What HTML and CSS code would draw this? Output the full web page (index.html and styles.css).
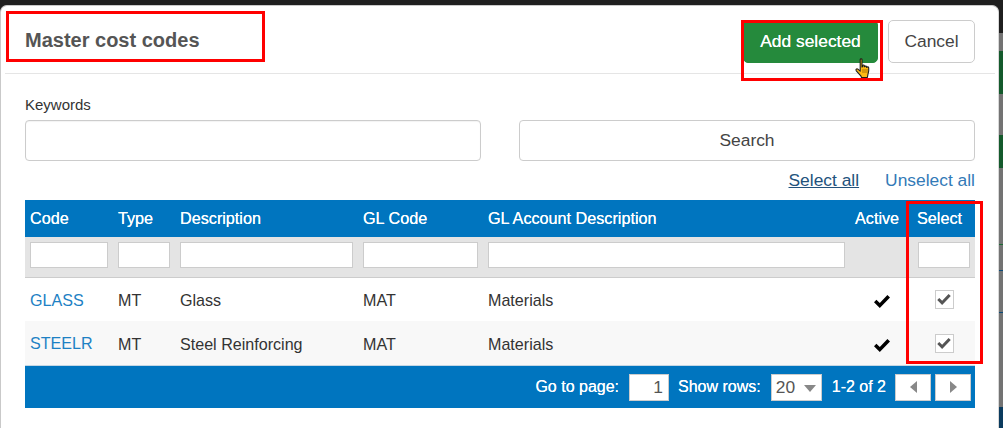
FILE: index.html
```html
<!DOCTYPE html>
<html lang="en">
<head>
<meta charset="utf-8">
<title>Master cost codes</title>
<link rel="stylesheet" href="styles.css">
</head>
<body>
<div class="side-strip">
  <i class="s-18"></i><i class="s-green s-43"></i><i class="s-41"></i><i class="s-green s-33"></i><i class="s-76"></i><i class="s-line-g"></i><i class="s-25"></i><i class="s-line-n"></i><i class="s-41"></i><i class="s-line-n"></i><i class="s-94"></i><i class="s-navy"></i>
</div>
<div class="modal">
  <header class="modal-header">
    <h2 class="modal-title">Master cost codes</h2>
    <div class="actions">
      <button class="btn btn-add" type="button">Add selected</button>
      <button class="btn btn-cancel" type="button">Cancel</button>
    </div>
  </header>
  <div class="modal-body">
    <label class="kw-label" for="kw">Keywords</label>
    <div class="search-row">
      <input id="kw" class="field" type="text">
      <button class="field search-btn" type="button">Search</button>
    </div>
    <div class="select-links">
      <a class="link-dark" href="#">Select all</a>
      <a class="link-light" href="#">Unselect all</a>
    </div>
    <table class="grid">
      <colgroup>
        <col class="c-code"><col class="c-type"><col class="c-desc"><col class="c-gl"><col class="c-acc"><col class="c-active"><col class="c-select">
      </colgroup>
      <thead>
        <tr class="head-row">
          <th>Code</th><th>Type</th><th>Description</th><th>GL Code</th><th>GL Account Description</th><th class="right">Active</th><th class="sel-head">Select</th>
        </tr>
        <tr class="filter-row">
          <td><input type="text"></td><td><input type="text"></td><td><input type="text"></td><td><input type="text"></td><td><input type="text"></td><td></td><td class="sel-filter"><input type="text"></td>
        </tr>
      </thead>
      <tbody>
        <tr class="row">
          <td><a class="code" href="#">GLASS</a></td><td>MT</td><td>Glass</td><td>MAT</td><td>Materials</td>
          <td class="tick-cell"><svg class="tick" viewBox="0 0 16 13"><path d="M0 7.200 2.400 4.800 5.800 8 13.400 0 16 2.500 5.800 13Z"/></svg></td>
          <td class="center"><span class="cb"><svg viewBox="0 0 16 13"><path d="M0 7.200 2.400 4.800 5.800 8 13.400 0 16 2.500 5.800 13Z"/></svg></span></td>
        </tr>
        <tr class="row alt">
          <td><a class="code up" href="#">STEELR</a></td><td>MT</td><td>Steel Reinforcing</td><td>MAT</td><td>Materials</td>
          <td class="tick-cell"><svg class="tick" viewBox="0 0 16 13"><path d="M0 7.200 2.400 4.800 5.800 8 13.400 0 16 2.500 5.800 13Z"/></svg></td>
          <td class="center"><span class="cb"><svg viewBox="0 0 16 13"><path d="M0 7.200 2.400 4.800 5.800 8 13.400 0 16 2.500 5.800 13Z"/></svg></span></td>
        </tr>
      </tbody>
    </table>
    <div class="pager">
      <span>Go to page:</span>
      <input class="page-input" type="text" value="1">
      <span>Show rows:</span>
      <span class="rows-select">20<i class="caret"></i></span>
      <span class="range">1-2 of 2</span>
      <span class="nav-btns">
        <button class="nav" type="button" aria-label="Previous"><i class="arrow-l"></i></button>
        <button class="nav" type="button" aria-label="Next"><i class="arrow-r"></i></button>
      </span>
    </div>
  </div>
</div>
<div class="mark mark-title"></div>
<div class="mark mark-add"></div>
<div class="mark mark-select"></div>
<svg class="hand" viewBox="0 0 18 21">
  <path d="M6.200 1.600c0-1 1.800-1 1.800 0V9l.6-.2V7.600c0-.8 1.600-.8 1.700 0v1.200l.5-.1c.1-.8 1.600-.7 1.700.1l.1.6.4-.1c.3-.7 1.600-.5 1.700.4.2 2 .1 4.600-.7 6.300l-.6 3.500H7.500L6.800 17.800 2.300 12.800c-1-1.300.4-2.600 1.600-1.600L6.200 13.200Z" fill="#fdb913" stroke="#1c1c1c" stroke-width="1.100" stroke-linejoin="round"/>
  <path d="M9 11v4M11 11v4M13 11v4" stroke="#9a6200" stroke-width=".8"/>
</svg>
</body>
</html>
```
FILE: styles.css
```css
* { box-sizing: border-box; }
html, body { margin: 0; height: 428px; overflow: hidden; }
body {
  position: relative;
  background: #1f1f1f;
  font-family: "Liberation Sans", Arial, sans-serif;
  font-size: 16px;
  color: #333;
}
.side-strip {
  position: absolute;
  right: 0; top: 33px;
  width: 4px; height: 395px;
  display: flex;
  flex-direction: column;
  background: #737373;
}
.side-strip i { display: block; flex: none; }
.s-18 { height: 18px; }
.s-25 { height: 25px; }
.s-33 { height: 33px; }
.s-41 { height: 41px; }
.s-43 { height: 43px; }
.s-76 { height: 76px; }
.s-94 { height: 94px; }
.s-green { background: #145a2c; }
.s-line-g { height: 1px; background: #1c6a34; }
.s-line-n { height: 1px; background: #0d4a78; }
.s-navy { height: 21px; background: #0b3b5e; }

.modal {
  position: absolute;
  left: 0; top: 5px;
  width: 999px; height: 423px;
  background: #fff;
  border: 1px solid #c9c9c9;
  border-bottom: 0;
  border-right-color: #d8d8d8;
  border-radius: 7px 7px 0 0;
}
.modal-header {
  height: 68px;
  margin: 0 3px 0 4px;
  border-bottom: 1px solid #e5e5e5;
  display: flex;
  align-items: flex-start;
  justify-content: space-between;
  padding: 17px 20px 0 20px;
}
.modal-title {
  margin: 0;
  padding-top: 7px;
  font-size: 20px;
  line-height: 20px;
  font-weight: 700;
  color: #555;
}
.actions { display: flex; gap: 10px; margin-top: -3px; }
.btn {
  height: 43px;
  border-radius: 5px;
  font: 17.400px "Liberation Sans", Arial, sans-serif;
  padding: 0;
}
.btn-add {
  width: 135px;
  background: #258a3c;
  border: 1px solid #258a3c;
  color: #fff;
  text-shadow: 0 0 .4px #fff;
}
.btn-cancel {
  width: 87px;
  background: #fff;
  border: 1px solid #ccc;
  color: #444;
}
.modal-body { padding: 0 23px 0 24px; }
.kw-label {
  display: block;
  margin-top: 21px;
  height: 20px;
  line-height: 20px;
  font-size: 15px;
  color: #333;
}
.search-row { display: flex; gap: 38px; margin-top: 5px; }
.field {
  width: 456px;
  height: 41px;
  border: 1px solid #ccc;
  border-radius: 4px;
  background: #fff;
  box-shadow: inset 0 1px 1px rgba(0,0,0,.05);
}
.search-btn {
  font: 17.400px "Liberation Sans", Arial, sans-serif;
  color: #444;
  box-shadow: none;
}
.select-links {
  display: flex;
  justify-content: flex-end;
  gap: 26px;
  height: 39px;
  padding-top: 9px;
  font-size: 17.400px;
  line-height: 20px;
}
.link-dark { color: #23527c; text-decoration: underline; }
.link-light { color: #337ab7; text-decoration: none; }

.grid {
  width: 950px;
  table-layout: fixed;
  border-collapse: collapse;
}
.c-code { width: 88px; }
.c-type { width: 62px; }
.c-desc { width: 183px; }
.c-gl { width: 125px; }
.c-acc { width: 367px; }
.c-active { width: 59px; }
.c-select { width: 66px; }
.grid th, .grid td { padding: 0 5px; text-align: left; white-space: nowrap; }
.head-row { height: 37px; background: #0075bf; }
.head-row th {
  color: #fff;
  font-size: 16.200px;
  font-weight: 400;
  text-shadow: 0 0 .4px #fff;
}
.grid .sel-head { padding-left: 8px; }
.filter-row { height: 40px; background: #e4e4e4; border-bottom: 1px solid #ccc; }
.filter-row td { vertical-align: top; padding-top: 5px; }
.filter-row input {
  display: block;
  width: 100%;
  height: 26px;
  background: #fff;
  border: 1px solid #ccc;
  padding: 0;
}
.grid .sel-filter { padding: 5px 5px 0 9px; }
.row { height: 44px; background: #fff; font-size: 16.100px; color: #333; }
.row.alt { background: #f8f8f8; }
.row td { padding-top: 2px; }
.code { color: #1d81c4; text-decoration: none; font-size: 16.100px; }
.code.up { position: relative; top: -1px; }
.grid .right { text-align: right; padding-right: 10px; }
.grid .tick-cell { text-align: right; padding: 2px 19px 0 5px; }
.grid .center { text-align: center; padding: 0 5px 0 9px; }
.tick { display: inline-block; width: 16px; height: 13px; vertical-align: middle; fill: #000; }
.cb {
  display: inline-flex;
  align-items: center;
  justify-content: center;
  width: 19px; height: 19px;
  border: 1px solid #ccc;
  background: #fff;
  vertical-align: middle;
}
.cb svg { width: 14px; height: 11px; fill: #555; }

.pager {
  width: 950px;
  height: 43px;
  background: #0075bf;
  border-top: 1px solid #c5d7e4;
  display: flex;
  align-items: center;
  justify-content: flex-end;
  padding-right: 4px;
  color: #fff;
  font-size: 16px;
  text-shadow: 0 0 .3px #fff;
}
.page-input {
  width: 40px; height: 27px;
  margin: 0 9px 0 10px;
  border: 1px solid #ccc;
  background: #fff;
  text-align: right;
  padding: 0 5px 0 0;
  font: 17.400px "Liberation Sans", Arial, sans-serif;
  color: #555;
}
.rows-select {
  display: flex;
  align-items: center;
  width: 51px; height: 27px;
  margin-left: 10px;
  padding-left: 4px;
  background: #fff;
  border: 1px solid #ccc;
  color: #555;
  font-size: 17.400px;
  text-shadow: none;
  position: relative;
}
.caret {
  position: absolute;
  right: 5px; top: 10px;
  border-left: 6px solid transparent;
  border-right: 6px solid transparent;
  border-top: 7px solid #888;
}
.range { margin-left: 10px; }
.nav-btns { display: flex; gap: 4px; margin-left: 9px; }
.nav {
  width: 36px; height: 27px;
  padding: 0;
  background: #fff;
  border: 1px solid #ccc;
  display: flex;
  align-items: center;
  justify-content: center;
}
.arrow-l, .arrow-r { display: block; border-top: 6px solid transparent; border-bottom: 6px solid transparent; }
.arrow-l { border-right: 7px solid #888; }
.arrow-r { border-left: 7px solid #888; }

.mark { position: absolute; border: 3px solid #f00; pointer-events: none; }
.mark-title { left: 6px; top: 11px; width: 259px; height: 51px; }
.mark-add { left: 741px; top: 20px; width: 142px; height: 61px; }
.mark-select { left: 906px; top: 201px; width: 77px; height: 163px; }
.hand { position: absolute; left: 854px; top: 58px; width: 18px; height: 21px; }
```
